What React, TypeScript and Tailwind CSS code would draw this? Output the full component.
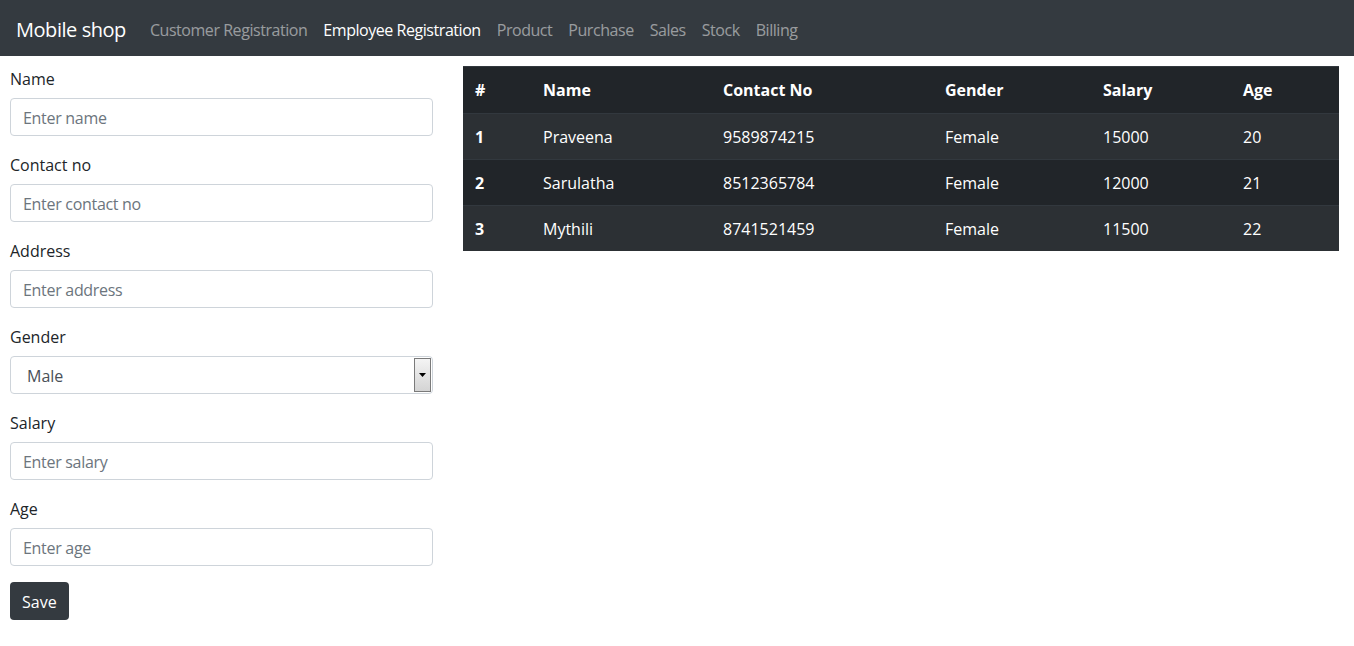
const navLinks = [
  { label: "Customer Registration", active: false },
  { label: "Employee Registration", active: true },
  { label: "Product", active: false },
  { label: "Purchase", active: false },
  { label: "Sales", active: false },
  { label: "Stock", active: false },
  { label: "Billing", active: false },
]

const fields = [
  { label: "Name", placeholder: "Enter name" },
  { label: "Contact no", placeholder: "Enter contact no" },
  { label: "Address", placeholder: "Enter address" },
]

const fieldsAfter = [
  { label: "Salary", placeholder: "Enter salary" },
  { label: "Age", placeholder: "Enter age" },
]

const employees = [
  { id: 1, name: "Praveena", contact: "9589874215", gender: "Female", salary: 15000, age: 20 },
  { id: 2, name: "Sarulatha", contact: "8512365784", gender: "Female", salary: 12000, age: 21 },
  { id: 3, name: "Mythili", contact: "8741521459", gender: "Female", salary: 11500, age: 22 },
]

const cols = "grid grid-cols-[68px_180px_222px_158px_140px_1fr]"

function Field({ label, placeholder }: { label: string; placeholder: string }) {
  return (
    <div className="mb-[17px]">
      <label className="block mb-[7px] leading-6 text-[#212529]">{label}</label>
      <input
        placeholder={placeholder}
        className="block w-full h-[38px] px-3 pt-[2px] border border-[#ced4da] rounded text-[#495057] placeholder:text-[#6c757d] outline-none tracking-[-0.3px]"
      />
    </div>
  )
}

export default function App() {
  return (
    <div className="min-h-screen bg-white text-base font-['Open_Sans',sans-serif]">
      {/* Navbar */}
      <header className="bg-[#343a40] h-14 flex items-center px-4 pt-[3px] tracking-[-0.45px]">
        <span className="text-white text-[20px] mr-4 leading-[30px]">Mobile shop</span>
        <nav className="flex items-center">
          {navLinks.map((l) => (
            <a
              key={l.label}
              className={`px-2 leading-6 ${l.active ? "text-white" : "text-white/50"}`}
            >
              {l.label}
            </a>
          ))}
        </nav>
      </header>

      <div className="flex gap-[30px] pl-[10px] pr-[15px]">
        {/* Form */}
        <form className="w-[423px] pt-[11px]">
          {fields.map((f) => (
            <Field key={f.label} {...f} />
          ))}
          <div className="mb-[17px]">
            <label className="block mb-[7px] leading-6 text-[#212529]">Gender</label>
            <div className="flex items-stretch h-[38px] border border-[#ced4da] rounded pl-4 pr-px py-px">
              <span className="flex-1 flex items-center pt-[2px] text-[#495057]">Male</span>
              <div className="w-[17px] flex items-center justify-center border border-[#7a7a7a] bg-gradient-to-b from-[#f4f4f4] to-[#d4d4d4]">
                <svg width="7" height="4" viewBox="0 0 7 4">
                  <path d="M0 0h7L3.5 4z" fill="#000" />
                </svg>
              </div>
            </div>
          </div>
          {fieldsAfter.map((f) => (
            <Field key={f.label} {...f} />
          ))}
          <button
            type="button"
            className="h-[38px] px-3 pt-px rounded bg-[#343a40] text-white leading-6 -mt-px"
          >
            Save
          </button>
        </form>

        {/* Table */}
        <div className="flex-1 mt-[10px] self-start text-white">
          <div className={`${cols} h-[47px] items-center bg-[#212529] border-t border-[#32383e] font-bold`}>
            <div className="px-3">#</div>
            <div className="px-3">Name</div>
            <div className="px-3">Contact No</div>
            <div className="px-3">Gender</div>
            <div className="px-3">Salary</div>
            <div className="px-3">Age</div>
          </div>
          {employees.map((e, i) => (
            <div
              key={e.id}
              className={`${cols} h-[46px] items-center border-t border-[#32383e] ${i % 2 === 0 ? "bg-[#2c3034]" : "bg-[#212529]"}`}
            >
              <div className="px-3 font-bold">{e.id}</div>
              <div className="px-3">{e.name}</div>
              <div className="px-3">{e.contact}</div>
              <div className="px-3">{e.gender}</div>
              <div className="px-3">{e.salary}</div>
              <div className="px-3">{e.age}</div>
            </div>
          ))}
        </div>
      </div>
    </div>
  )
}
